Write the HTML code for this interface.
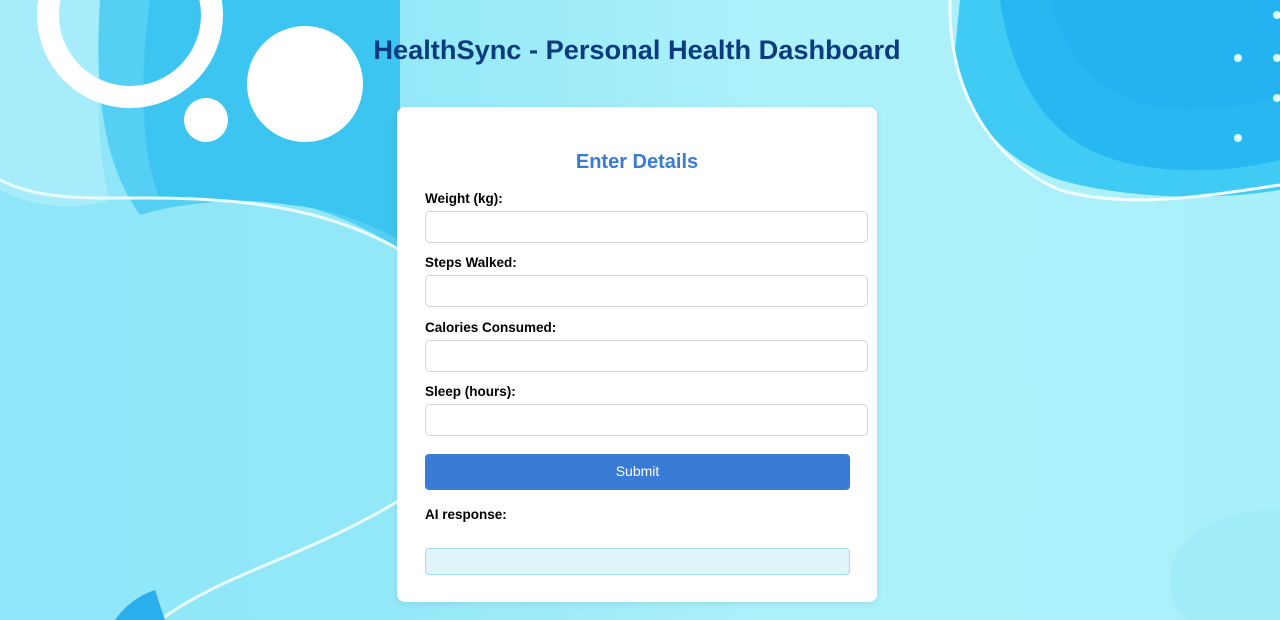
<!DOCTYPE html>
<html><head><meta charset="utf-8"><style>
*{box-sizing:border-box;margin:0;padding:0}
body{width:1280px;height:620px;overflow:hidden;position:relative;font-family:"Liberation Sans",Arial,sans-serif;background:#a9eff9}
svg.bg{position:absolute;left:0;top:0}
h1{position:absolute;left:0;width:1274px;top:34px;text-align:center;font-size:27.2px;color:#0b3a7e;font-weight:bold}
.card{position:absolute;left:397px;top:107px;width:480px;height:495px;background:#fff;border-radius:8px;box-shadow:0 2px 8px rgba(0,0,0,.08)}
h2{position:absolute;left:0;width:480px;top:151px;text-align:center;font-size:20px;color:#3a7bd5;font-weight:bold}
.l{position:absolute;left:425px;font-size:13.5px;font-weight:bold;color:#000}
.i{position:absolute;left:425px;width:443px;height:32px;border:1px solid #d4d4d4;border-radius:5px;background:#fff}
.btn{position:absolute;left:425px;top:454px;width:425px;height:36px;background:#3a7bd5;border-radius:4px;color:#fff;font-size:14px;text-align:center;line-height:35px}
.resp{position:absolute;left:425px;top:548px;width:425px;height:27px;background:#dff5f9;border:1px solid #9fdcec;border-radius:4px}
</style></head><body>
<svg class="bg" width="1280" height="620">
<defs><linearGradient id="g" x1="0" x2="1" y1="0" y2="0"><stop offset="0" stop-color="#8ee6f8"/><stop offset="0.3" stop-color="#93e8f8"/><stop offset="0.6" stop-color="#adf1fa"/><stop offset="1" stop-color="#aaf0fa"/></linearGradient></defs>
<rect width="1280" height="620" fill="url(#g)"/>
<path d="M0 0H110C95 60 95 150 110 200C60 215 20 200 0 190Z" fill="#a6ecfa"/>
<path d="M100 0H400V250C370 230 340 215 300 205C240 195 170 205 140 215C100 160 95 80 100 0Z" fill="#55cff3"/>
<path d="M150 0H400V240C370 225 340 210 290 205C240 198 200 200 160 200C140 150 140 70 150 0Z" fill="#3dc5f1"/>
<path d="M0 180C40 200 80 198 150 198C250 198 330 210 400 250" stroke="#eafcff" stroke-width="3" fill="none"/>
<path d="M160 620C230 570 300 560 400 500" stroke="#eafcff" stroke-width="3" fill="none"/>
<path d="M115 620C125 605 140 595 155 590L165 620Z" fill="#29b0ec"/>
<circle cx="130" cy="15" r="82" fill="none" stroke="#fff" stroke-width="22"/>
<circle cx="305" cy="84" r="58" fill="#fff"/>
<circle cx="206" cy="120" r="22" fill="#fff"/>
<path d="M960 0H1280V190C1220 200 1130 200 1060 180C1000 160 960 110 955 50Z" fill="#3fcbf3"/>
<path d="M1000 0H1280V160C1220 175 1140 175 1090 150C1040 125 1010 70 1000 0Z" fill="#27b7f1"/>
<path d="M1050 0H1280V95C1220 115 1150 115 1110 90C1080 70 1060 40 1050 0Z" fill="#22b3f0"/>
<path d="M950 0C948 90 990 160 1060 190C1130 210 1210 195 1280 185" stroke="#f0feff" stroke-width="3" fill="none"/>
<circle cx="1238" cy="58" r="4" fill="#dff"/><circle cx="1238" cy="138" r="4" fill="#dff"/>
<circle cx="1277" cy="15" r="4" fill="#dff"/><circle cx="1277" cy="58" r="4" fill="#dff"/><circle cx="1277" cy="98" r="4" fill="#dff"/>
<ellipse cx="1270" cy="580" rx="100" ry="70" fill="#a0edf9"/>
</svg>
<h1>HealthSync - Personal Health Dashboard</h1>
<div class="card"></div>
<h2 style="left:397px">Enter Details</h2>
<div class="l" style="top:191px">Weight (kg):</div>
<div class="i" style="top:211px"></div>
<div class="l" style="top:255px">Steps Walked:</div>
<div class="i" style="top:275px"></div>
<div class="l" style="top:320px">Calories Consumed:</div>
<div class="i" style="top:340px"></div>
<div class="l" style="top:384px">Sleep (hours):</div>
<div class="i" style="top:404px"></div>
<div class="btn">Submit</div>
<div class="l" style="top:507px">AI response:</div>
<div class="resp"></div>
</body></html>
